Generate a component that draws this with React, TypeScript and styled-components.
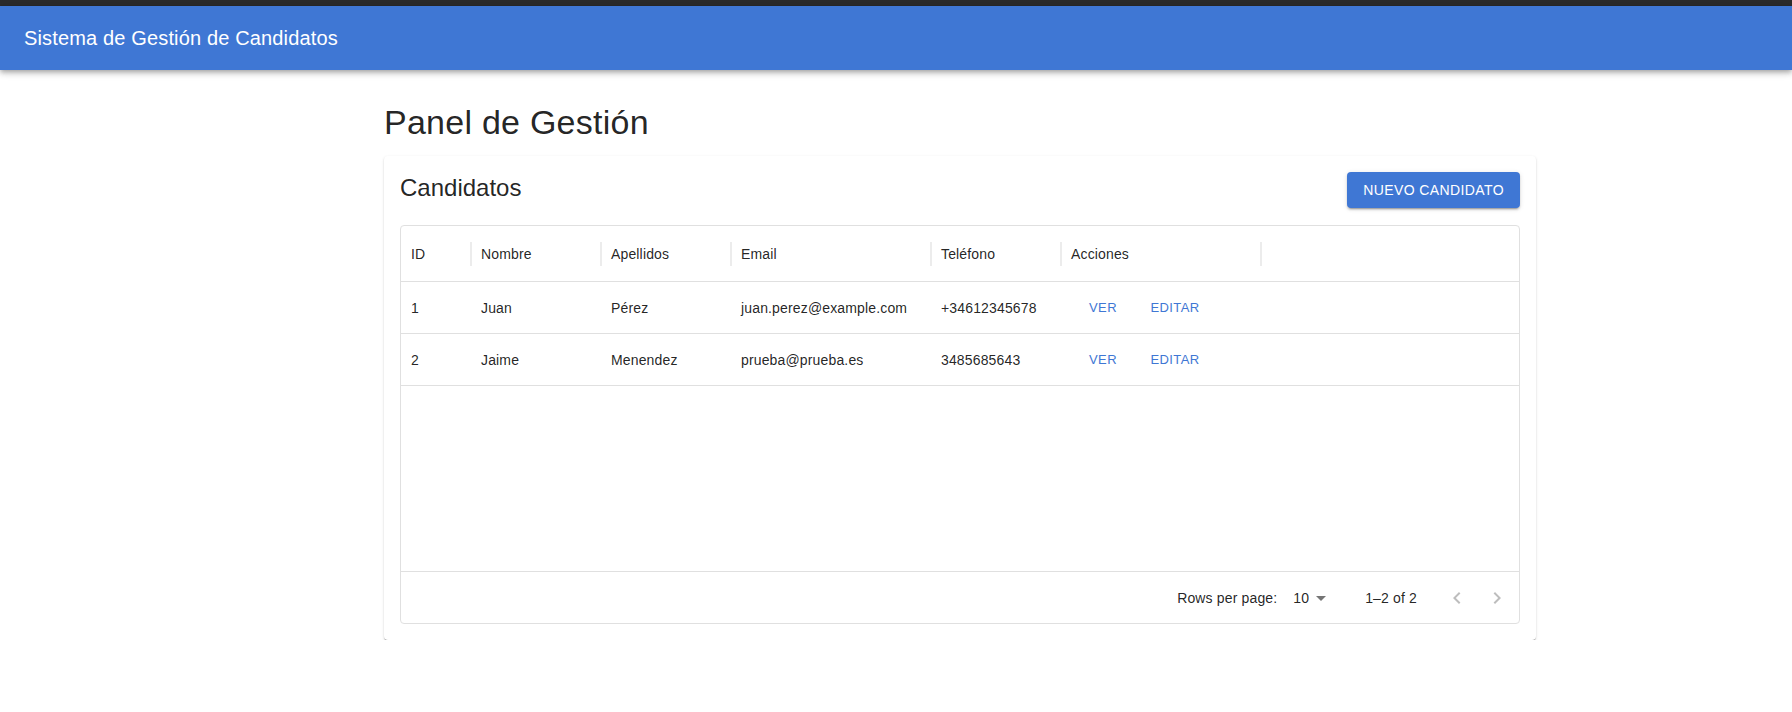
import React from 'react';
import styled, { createGlobalStyle } from 'styled-components';

const BLUE = '#3f77d4';
const TEXT = 'rgba(0, 0, 0, 0.87)';
const LINE = '#e0e0e0';

const GlobalStyle = createGlobalStyle`
  body {
    margin: 0;
    background: #fff;
    font-family: "Liberation Sans", Arial, Helvetica, sans-serif;
    color: ${TEXT};
  }
`;

interface Column {
  field: string;
  title: string;
  width: number;
}

interface Candidate {
  id: number;
  nombre: string;
  apellidos: string;
  email: string;
  telefono: string;
}

const columns: Column[] = [
  { field: 'id', title: 'ID', width: 70 },
  { field: 'nombre', title: 'Nombre', width: 130 },
  { field: 'apellidos', title: 'Apellidos', width: 130 },
  { field: 'email', title: 'Email', width: 200 },
  { field: 'telefono', title: 'Teléfono', width: 130 },
  { field: 'acciones', title: 'Acciones', width: 200 },
];

const candidates: Candidate[] = [
  { id: 1, nombre: 'Juan', apellidos: 'Pérez', email: 'juan.perez@example.com', telefono: '+34612345678' },
  { id: 2, nombre: 'Jaime', apellidos: 'Menendez', email: 'prueba@prueba.es', telefono: '3485685643' },
];

export default function App() {
  return (
    <>
      <GlobalStyle />
      <TopStrip />
      <AppBar>
        <AppTitle>Sistema de Gestión de Candidatos</AppTitle>
      </AppBar>
      <Main>
        <PageTitle>Panel de Gestión</PageTitle>
        <Paper>
          <PanelHeader>
            <PanelTitle>Candidatos</PanelTitle>
            <ContainedButton>Nuevo Candidato</ContainedButton>
          </PanelHeader>
          <Grid>
            <HeaderRow>
              {columns.map((col) => (
                <HeaderCell key={col.field} $w={col.width}>
                  <HeaderTitle>{col.title}</HeaderTitle>
                  <Separator />
                </HeaderCell>
              ))}
            </HeaderRow>
            {candidates.map((c) => (
              <Row key={c.id}>
                <Cell $w={70}>{c.id}</Cell>
                <Cell $w={130}>{c.nombre}</Cell>
                <Cell $w={130}>{c.apellidos}</Cell>
                <Cell $w={200}>{c.email}</Cell>
                <Cell $w={130}>{c.telefono}</Cell>
                <Cell $w={200}>
                  <TextButton>Ver</TextButton>
                  <TextButton>Editar</TextButton>
                </Cell>
              </Row>
            ))}
            <Filler />
            <Footer>
              <FooterText>Rows per page:</FooterText>
              <SelectBox>
                10
                <svg viewBox="0 0 24 24" width="24" height="24">
                  <path d="M7 10l5 5 5-5z" fill="rgba(0,0,0,0.54)" />
                </svg>
              </SelectBox>
              <FooterText>1–2 of 2</FooterText>
              <Actions>
                <IconBtn>
                  <svg viewBox="0 0 24 24" width="24" height="24">
                    <path d="M15.41 16.59 10.83 12l4.58-4.59L14 6l-6 6 6 6z" fill="rgba(0,0,0,0.26)" />
                  </svg>
                </IconBtn>
                <IconBtn>
                  <svg viewBox="0 0 24 24" width="24" height="24">
                    <path d="M8.59 16.59 13.17 12 8.59 7.41 10 6l6 6-6 6z" fill="rgba(0,0,0,0.26)" />
                  </svg>
                </IconBtn>
              </Actions>
            </Footer>
          </Grid>
        </Paper>
      </Main>
    </>
  );
}

const TopStrip = styled.div`
  height: 6px;
  background: #2b2b2b;
`;

const AppBar = styled.header`
  position: relative;
  z-index: 1;
  height: 64px;
  display: flex;
  align-items: center;
  padding: 0 24px;
  background: ${BLUE};
  color: #fff;
  box-shadow: 0px 2px 4px -1px rgba(0, 0, 0, 0.2), 0px 4px 5px 0px rgba(0, 0, 0, 0.14),
    0px 1px 10px 0px rgba(0, 0, 0, 0.12);
`;

const AppTitle = styled.div`
  font-size: 20px;
  font-weight: 500;
  line-height: 1.6;
  letter-spacing: 0.0075em;
`;

const Main = styled.main`
  width: 1152px;
  margin-left: 384px;
`;

const PageTitle = styled.h1`
  margin: 31px 0 13px;
  font-size: 34px;
  line-height: 42px;
  font-weight: 400;
  letter-spacing: 0.00735em;
  color: ${TEXT};
`;

const Paper = styled.section`
  padding: 16px;
  border-radius: 4px;
  background: #fff;
  box-shadow: 0px 2px 1px -1px rgba(0, 0, 0, 0.3), 0px 1px 1px 0px rgba(0, 0, 0, 0.16),
    0px 1px 3px 0px rgba(0, 0, 0, 0.12);
`;

const PanelHeader = styled.div`
  display: flex;
  justify-content: space-between;
  align-items: flex-start;
  margin-bottom: 17px;
`;

const PanelTitle = styled.h2`
  margin: 0;
  font-size: 24px;
  line-height: 32px;
  font-weight: 400;
  color: ${TEXT};
`;

const ContainedButton = styled.button`
  height: 36px;
  padding: 6px 16px;
  border: 0;
  border-radius: 4px;
  background: ${BLUE};
  color: #fff;
  font-family: inherit;
  font-size: 14px;
  font-weight: 500;
  letter-spacing: 0.02857em;
  text-transform: uppercase;
  box-shadow: 0px 3px 1px -2px rgba(0, 0, 0, 0.2), 0px 2px 2px 0px rgba(0, 0, 0, 0.14),
    0px 1px 5px 0px rgba(0, 0, 0, 0.12);
`;

const Grid = styled.div`
  box-sizing: border-box;
  height: 399px;
  display: flex;
  flex-direction: column;
  border: 1px solid ${LINE};
  border-radius: 4px;
  font-size: 14px;
  letter-spacing: 0.01071em;
  color: ${TEXT};
`;

const HeaderRow = styled.div`
  box-sizing: border-box;
  height: 56px;
  display: flex;
  border-bottom: 1px solid ${LINE};
`;

const HeaderCell = styled.div<{ $w: number }>`
  box-sizing: border-box;
  width: ${({ $w }) => $w}px;
  display: flex;
  align-items: center;
  padding-left: 10px;
`;

const HeaderTitle = styled.span`
  flex: 1;
  font-weight: 500;
`;

const Separator = styled.span`
  width: 2px;
  height: 24px;
  margin-right: -1px;
  background: #ececec;
`;

const Row = styled.div`
  box-sizing: border-box;
  height: 52px;
  display: flex;
  border-bottom: 1px solid ${LINE};
`;

const Cell = styled.div<{ $w: number }>`
  box-sizing: border-box;
  width: ${({ $w }) => $w}px;
  display: flex;
  align-items: center;
  gap: 8px;
  padding: 0 10px;
  white-space: nowrap;
`;

const TextButton = styled.button`
  min-width: 64px;
  padding: 5px 5px 3px;
  border: 0;
  background: transparent;
  color: ${BLUE};
  font-family: inherit;
  font-size: 13px;
  font-weight: 500;
  line-height: 1.75;
  letter-spacing: 0.02857em;
  text-transform: uppercase;
`;

const Filler = styled.div`
  flex: 1;
`;

const Footer = styled.div`
  box-sizing: border-box;
  height: 52px;
  display: flex;
  align-items: center;
  justify-content: flex-end;
  padding-right: 2px;
  border-top: 1px solid ${LINE};
`;

const FooterText = styled.span`
  font-size: 14px;
`;

const SelectBox = styled.div`
  display: flex;
  align-items: center;
  margin: 0 32px 0 8px;
  padding-left: 8px;
`;

const Actions = styled.div`
  display: flex;
  margin-left: 20px;
`;

const IconBtn = styled.span`
  display: flex;
  padding: 8px;
`;
